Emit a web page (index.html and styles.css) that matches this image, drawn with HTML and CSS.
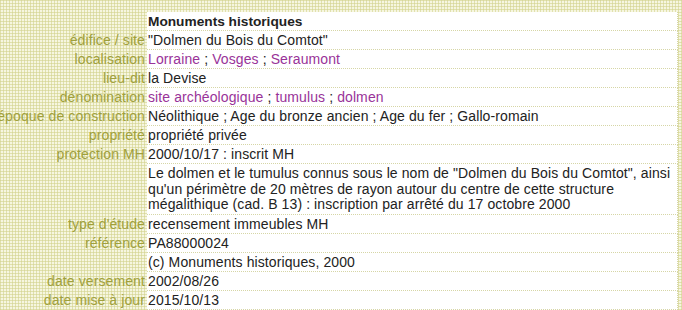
FILE: index.html
```html
<!DOCTYPE html>
<html lang="fr">
<head>
<meta charset="utf-8">
<title>Monuments historiques</title>
<link rel="stylesheet" href="styles.css">
</head>
<body>
<div class="sheet">
  <div class="lbl"></div><div class="val head">Monuments historiques</div>
  <div class="lbl"><span>édifice / site</span></div><div class="val">"Dolmen du Bois du Comtot"</div>
  <div class="lbl"><span>localisation</span></div><div class="val"><a href="#">Lorraine</a> ; <a href="#">Vosges</a> ; <a href="#">Seraumont</a></div>
  <div class="lbl"><span>lieu-dit</span></div><div class="val">la Devise</div>
  <div class="lbl"><span>dénomination</span></div><div class="val"><a href="#">site archéologique</a> ; <a href="#">tumulus</a> ; <a href="#">dolmen</a></div>
  <div class="lbl"><span>époque de construction</span></div><div class="val">Néolithique ; Age du bronze ancien ; Age du fer ; Gallo-romain</div>
  <div class="lbl"><span>propriété</span></div><div class="val">propriété privée</div>
  <div class="lbl"><span>protection MH</span></div><div class="val">2000/10/17 : inscrit MH</div>
  <div class="lbl"></div><div class="val multi">Le dolmen et le tumulus connus sous le nom de "Dolmen du Bois du Comtot", ainsi qu'un périmètre de 20 mètres de rayon autour du centre de cette structure mégalithique (cad. B 13) : inscription par arrêté du 17 octobre 2000</div>
  <div class="lbl"><span>type d'étude</span></div><div class="val">recensement immeubles MH</div>
  <div class="lbl"><span>référence</span></div><div class="val">PA88000024</div>
  <div class="lbl"></div><div class="val">(c) Monuments historiques, 2000</div>
  <div class="lbl"><span>date versement</span></div><div class="val">2002/08/26</div>
  <div class="lbl"><span>date mise à jour</span></div><div class="val">2015/10/13</div>
</div>
</body>
</html>
```
FILE: styles.css
```css
html, body {
  margin: 0;
  padding: 0;
}
body {
  font-family: "Liberation Sans", Arial, sans-serif;
  font-size: 14px;
  letter-spacing: 0.1px;
  color: #222;
  background-color: #f6f6e0;
  background-image:
    repeating-linear-gradient(0deg, rgba(210, 210, 140, 0.6) 0 1px, transparent 1px 3px),
    repeating-linear-gradient(90deg, rgba(210, 210, 140, 0.6) 0 1px, transparent 1px 3px);
  overflow: hidden;
}
.sheet {
  display: grid;
  grid-template-columns: 147px 531px;
  padding-top: 12px;
}
.lbl {
  display: flex;
  justify-content: flex-end;
  white-space: nowrap;
  padding: 2px 2px 2px 0;
  line-height: 15px;
  color: #a0a03c;
}
.val {
  background: #fff;
  padding: 2px 0 1px 1px;
  line-height: 15px;
  border-bottom: 1px dotted #d6d6a6;
  border-right: 1px dotted #d6d6a6;
}
.multi {
  line-height: 15.5px;
}
.head {
  font-weight: bold;
  font-size: 13.7px;
  letter-spacing: 0;
}
a {
  color: #993399;
  text-decoration: none;
}
```
